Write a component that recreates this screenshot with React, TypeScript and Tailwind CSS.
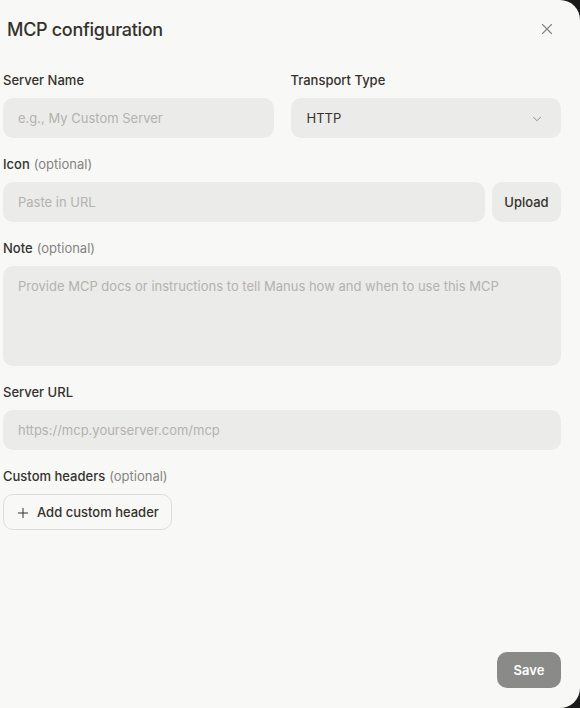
import React from "react";
import { X, ChevronDown, Plus } from "lucide-react";

const font = { fontFamily: "Inter, 'Noto Sans', sans-serif" };

function Label({ text, optional }: { text: string; optional?: boolean }) {
  return (
    <div className="h-5 flex items-center text-[13px] font-medium text-[#34322d] leading-5">
      {text}
      {optional && <span className="ml-1 font-normal text-[#858481]">(optional)</span>}
    </div>
  );
}

export default function App() {
  return (
    <div className="w-[580px] h-[708px] bg-[#1a1a1a]" style={font}>
      <div className="w-full h-full bg-[#f8f8f7] rounded-r-[20px] flex flex-col pl-[3px] pr-[19px]">
        <div className="h-[56px] flex items-center justify-between pl-1 pt-[2px]">
          <div className="text-[18px] font-medium tracking-[-0.3px] text-[#34322d]">MCP configuration</div>
          <X size={18} strokeWidth={1.5} className="text-[#858481] mr-[5px]" />
        </div>
        <div className="flex flex-col gap-4 mt-[14px]">
          <div className="flex gap-[17px]">
            <div className="flex-1 flex flex-col gap-2">
              <Label text="Server Name" />
              <div className="h-10 rounded-[10px] bg-[#ebebea] flex items-center px-[15px] pt-[1px] text-[13px] text-[#b3b2af]">
                e.g., My Custom Server
              </div>
            </div>
            <div className="flex-1 flex flex-col gap-2">
              <Label text="Transport Type" />
              <div className="h-10 rounded-[10px] bg-[#ebebea] flex items-center justify-between pl-[16px] pr-[17px] pt-[1px] text-[13px] text-[#34322d]">
                HTTP
                <ChevronDown size={14} strokeWidth={1.5} className="text-[#858481]" />
              </div>
            </div>
          </div>
          <div className="flex flex-col gap-2">
            <Label text="Icon" optional />
            <div className="flex gap-[7px]">
              <div className="flex-1 h-10 rounded-[10px] bg-[#ebebea] flex items-center px-[15px] pt-[1px] text-[13px] text-[#b3b2af]">
                Paste in URL
              </div>
              <div className="w-[69px] h-10 rounded-[10px] bg-[#ebebea] flex items-center justify-center pt-[1px] text-[13px] font-medium text-[#34322d]">
                Upload
              </div>
            </div>
          </div>
          <div className="flex flex-col gap-2">
            <Label text="Note" optional />
            <div className="h-[100px] rounded-[10px] bg-[#ebebea] px-[15px] pt-[10px] text-[13px] text-[#b3b2af] leading-5">
              Provide MCP docs or instructions to tell Manus how and when to use this MCP
            </div>
          </div>
          <div className="flex flex-col gap-2">
            <Label text="Server URL" />
            <div className="h-10 rounded-[10px] bg-[#ebebea] flex items-center px-[15px] pt-[1px] text-[13px] text-[#b3b2af]">
              https://mcp.yourserver.com/mcp
            </div>
          </div>
          <div className="flex flex-col gap-2">
            <Label text="Custom headers" optional />
            <div className="self-start h-9 rounded-[10px] border border-[#dcdcda] flex items-center gap-[6px] pl-[11px] pr-[12px] pt-[1px] text-[13px] font-medium text-[#34322d]">
              <Plus size={16} strokeWidth={1.5} />
              Add custom header
            </div>
          </div>
        </div>
        <div className="flex-1" />
        <div className="flex justify-end mb-[20px]">
          <div className="w-16 h-9 rounded-[10px] bg-[#8a8a88] flex items-center justify-center pt-[1px] text-[13px] font-semibold text-white">
            Save
          </div>
        </div>
      </div>
    </div>
  );
}
